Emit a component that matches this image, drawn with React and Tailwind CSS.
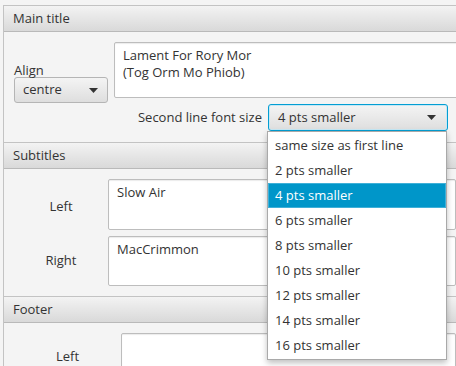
import * as React from "react";

const FONT = { fontFamily: "'Open Sans', Lato, sans-serif" };

const OPTIONS = [
  "same size as first line",
  "2 pts smaller",
  "4 pts smaller",
  "6 pts smaller",
  "8 pts smaller",
  "10 pts smaller",
  "12 pts smaller",
  "14 pts smaller",
  "16 pts smaller",
];

function Arrow() {
  return (
    <svg width="9" height="5" viewBox="0 0 9 5" className="shrink-0">
      <path d="M0 0 H9 L4.5 5 Z" fill="#333" />
    </svg>
  );
}

function Header({ children }) {
  return (
    <div className="h-[26px] pl-[9px] flex items-center text-[13px] text-[#333] border-b border-[#b9b9b9] bg-gradient-to-b from-[#f3f3f3] to-[#d9d9d9]">
      {children}
    </div>
  );
}

function Area({ className, children }) {
  return (
    <div className={`bg-white border border-[#bdbdbd] rounded-[2px] shadow-[inset_0_1px_1px_rgba(0,0,0,0.08)] px-[8px] pt-[4px] text-[13px] leading-[17px] text-[#333] ${className}`}>
      {children}
    </div>
  );
}

export default function App() {
  return (
    <div className="relative w-[456px] h-[366px] overflow-hidden bg-[#f4f4f4] pl-[3px] pt-[5px]" style={FONT}>
      {/* Main title */}
      <section className="border-l border-t border-[#c3c3c3]">
        <Header>Main title</Header>
        <div className="h-[110px] pl-[10px] pt-[10px]">
          <div className="flex">
            <div className="w-[94px] pt-[20px] shrink-0">
              <div className="text-[13px] text-[#333] leading-[16px]">Align</div>
              <div className="mt-[-1px] h-[26px] w-[94px] flex items-center justify-between pl-[8px] pr-[9px] rounded-[3px] border border-[#b5b5b5] bg-gradient-to-b from-[#f4f4f4] to-[#dedede] text-[13px] text-[#333]">
                centre
                <Arrow />
              </div>
            </div>
            <Area className="ml-[6px] h-[56px] flex-1 -mr-[10px]">
              <div>Lament For Rory Mor</div>
              <div>(Tog Orm Mo Phiob)</div>
            </Area>
          </div>
          <div className="flex items-center justify-end mt-[1px] pr-[8px]">
            <span className="text-[13px] text-[#333] mr-[6px]">Second line font size</span>
            <div className="h-[27px] w-[180px] flex items-center justify-between pl-[9px] pr-[11px] rounded-[3px] border border-[#039ed3] shadow-[inset_0_0_0_1px_#c6e8f5] bg-gradient-to-b from-[#f4f4f4] to-[#dedede] text-[13px] text-[#333]">
              4 pts smaller
              <Arrow />
            </div>
          </div>
        </div>
      </section>

      {/* Subtitles */}
      <section className="border-l border-t border-[#c3c3c3]">
        <Header>Subtitles</Header>
        <div className="h-[127px] pl-[10px] pt-[10px] flex flex-col gap-[6px]">
          <div className="flex items-center">
            <div className="w-[94px] text-center text-[13px] text-[#333] pt-[5px]">Left</div>
            <Area className="h-[51px] flex-1">Slow Air</Area>
          </div>
          <div className="flex items-center">
            <div className="w-[94px] text-center text-[13px] text-[#333]">Right</div>
            <Area className="h-[50px] flex-1">MacCrimmon</Area>
          </div>
        </div>
      </section>

      {/* Footer */}
      <section className="border-l border-t border-[#c3c3c3]">
        <Header>Footer</Header>
        <div className="pl-[10px] pt-[10px] flex items-start">
          <div className="w-[107px] text-center text-[13px] text-[#333] pt-[14px]">Left</div>
          <Area className="h-[50px] flex-1" />
        </div>
      </section>

      {/* Dropdown popup */}
      <div className="absolute left-[267px] top-[131px] w-[180px] bg-white border border-[#a9a9a9] shadow-[0_3px_6px_rgba(0,0,0,0.25)] py-[1px]">
        {OPTIONS.map((o) => (
          <div
            key={o}
            className={`h-[25px] flex items-center pl-[7px] text-[13px] ${o === "4 pts smaller" ? "bg-[#0096c9] text-white shadow-[inset_0_0_0_1px_#3fb0d8]" : "text-[#333]"}`}
          >
            {o}
          </div>
        ))}
      </div>
    </div>
  );
}
